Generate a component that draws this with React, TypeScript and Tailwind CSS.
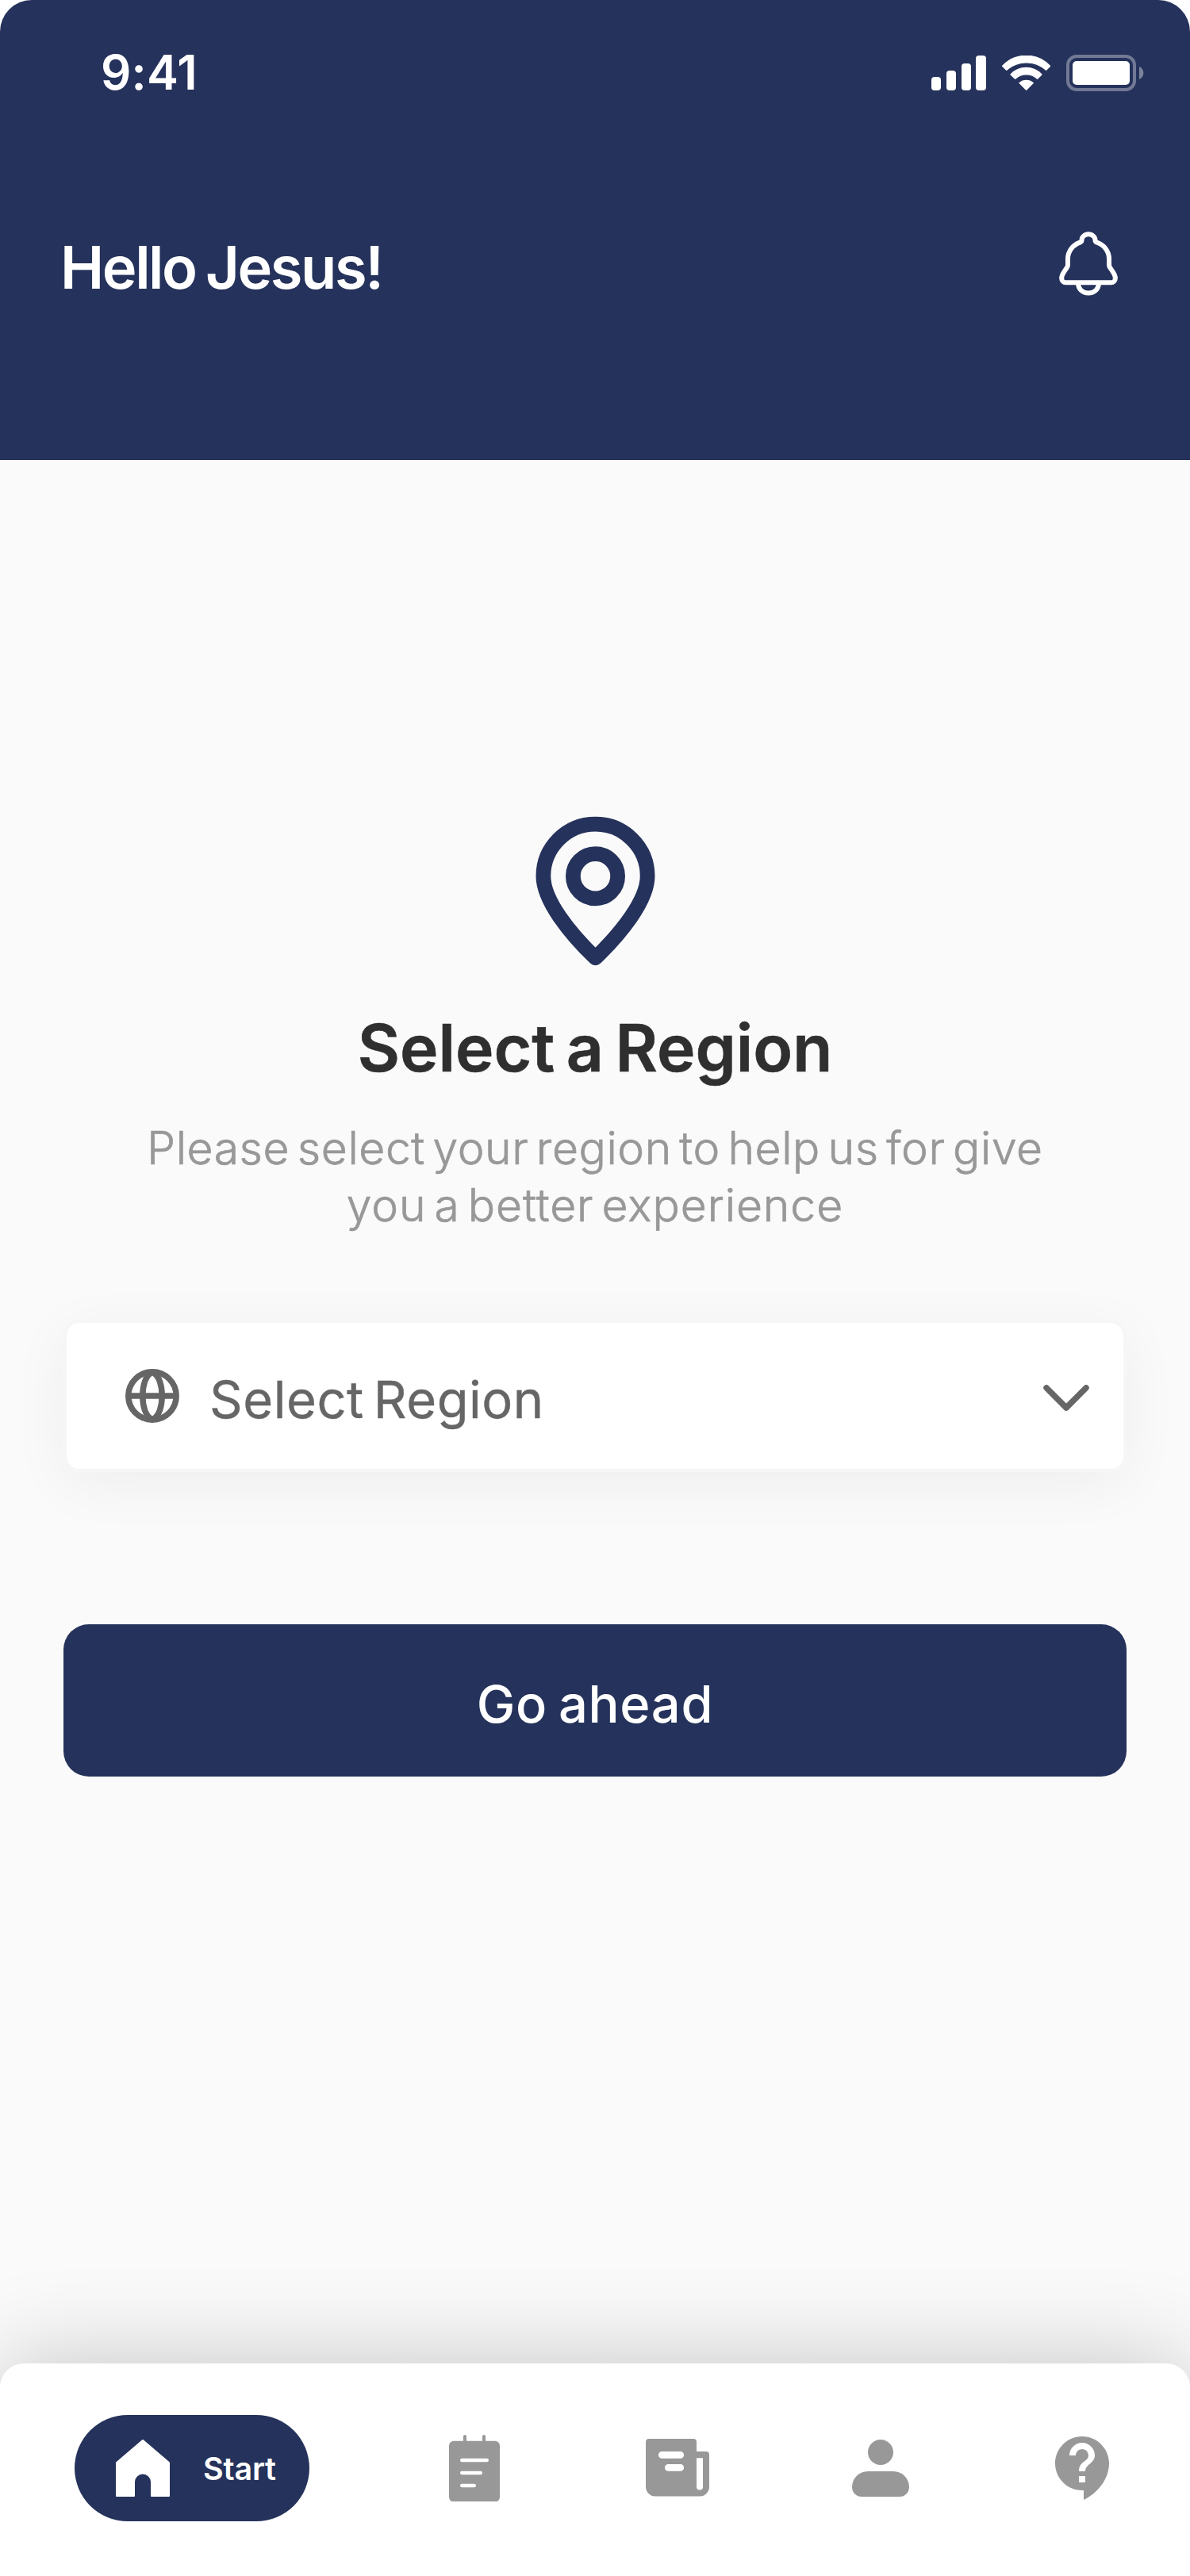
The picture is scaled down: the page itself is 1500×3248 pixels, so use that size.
import type { ReactNode } from "react";

function StatusBar() {
  return (
    <div className="flex h-[181px] items-center justify-between pr-[58px] pl-[127px]">
      <span className="text-[60px] leading-none font-semibold tracking-[0.2px]">9:41</span>
      <div className="flex items-center pt-[3px]">
        <div className="mr-[20px] flex h-[43.3px] items-end gap-[6.5px]">
          <span className="h-[16.5px] w-[12.3px] rounded-[4px] bg-white" />
          <span className="h-[24.5px] w-[12.3px] rounded-[4px] bg-white" />
          <span className="h-[33.5px] w-[12.3px] rounded-[4px] bg-white" />
          <span className="h-[43.3px] w-[12.3px] rounded-[4px] bg-white" />
        </div>
        <svg
          className="mr-[20px] h-[44.3px] w-[61.3px]"
          viewBox="368 87 184 133"
          fill="#fff"
          stroke="#fff"
          strokeWidth="4"
          strokeLinejoin="round"
        >
          <path d="M370 127A123 123 0 0 1 550 127L535 142A113 113 0 0 0 385 142Z" />
          <path d="M401 159A80 80 0 0 1 518 159L502 175A62 62 0 0 0 418 175Z" />
          <path d="M434 191A40 40 0 0 1 486 191L460 217Z" />
        </svg>
        <div className="h-[46px] w-[88px] rounded-[13px] border-4 border-white/35 p-[4px]">
          <div className="h-[30px] w-[72px] rounded-[5px] bg-white" />
        </div>
        <svg className="ml-[4px] h-4 w-[6px]" viewBox="0 0 6 16" fill="#fff" fillOpacity=".4">
          <path d="M0 0C3.3 1.4 5.4 4.5 5.4 8S3.3 14.6 0 16Z" />
        </svg>
      </div>
    </div>
  );
}

function BellIcon() {
  return (
    <svg className="h-[81px] w-[74px]" viewBox="585 755 222 243" fill="none" stroke="#fff" strokeWidth="18" strokeLinejoin="round">
      <path d="M696 765C681 765 670.500 776 670.500 787C670.500 791 668 794.500 664 796C636 806 618 830 618 859V880C618 884 617 888 614 892L604 907C598 916 594.500 922 594.500 931C594.500 941 601 948 611 948H781C791 948 797.500 941 797.500 931C797.500 922 794 916 788 907L778 892C775 888 774 884 774 880V859C774 830 756 806 728 796C724 794.500 721.500 791 721.500 787C721.500 776 711 765 696 765Z" />
      <path d="M657 950C657 973 674 987.500 696 987.500S735 973 735 950" />
    </svg>
  );
}

function PinIcon() {
  return (
    <svg className="size-[225px]" viewBox="0 0 24 24" fill="none" stroke="#25325b" strokeWidth="2" strokeLinejoin="round">
      <path d="M12 21C8.600 17.700 5 13.300 5 10A7 7 0 0 1 19 10C19 13.300 15.400 17.700 12 21Z" />
      <circle cx="12" cy="10" r="3" />
    </svg>
  );
}

function GlobeIcon() {
  return (
    <svg className="size-[68px]" viewBox="0 0 68 68" fill="none" stroke="#666" strokeWidth="7.5">
      <circle cx="34" cy="34" r="30.200" />
      <path d="M4 34H64" />
      <path d="M34 4C25 8 21.800 22 21.800 34S25 60 34 64C43 60 46.200 46 46.200 34S43 8 34 4Z" />
    </svg>
  );
}

function RegionSelect() {
  return (
    <button className="flex h-[192px] w-full items-center rounded-[20px] border-4 border-[#f6f6f6] bg-white pr-[43px] pl-[74px] shadow-[0_16px_72px_rgba(0,0,0,0.05)]">
      <GlobeIcon />
      <span className="mt-[8px] ml-[38px] text-[65px] leading-none font-normal tracking-[0.55px] text-[#666] [-webkit-text-stroke:0.4px_#666] [word-spacing:-7px]">
        Select Region
      </span>
      <svg
        className="mt-[5px] ml-auto h-[33px] w-[58px]"
        viewBox="0 0 58 33"
        fill="none"
        stroke="#666"
        strokeWidth="7.5"
        strokeLinecap="round"
        strokeLinejoin="round"
      >
        <path d="M4 3.800L29 29L54 3.800" />
      </svg>
    </button>
  );
}

function NavItem({ label, className, children }: { label: string; className: string; children: ReactNode }) {
  return (
    <button aria-label={label} className={className}>
      {children}
    </button>
  );
}

function BottomNav() {
  return (
    <nav className="relative flex h-[268px] items-start rounded-t-[30px] bg-white pt-[64.5px] pl-[94px] shadow-[0_0_120px_rgba(0,0,0,0.22)]">
      <button className="flex h-[134px] w-[296px] items-center rounded-full bg-[#25325b] pl-[52px] text-white">
        <svg className="h-[72px] w-[68px]" viewBox="0 0 68 72" fill="#fff">
          <path d="M33.200 .3Q34 -.3 34.800 .3L67.500 28.200Q68 28.700 68 29.400V71Q68 72 67 72H45Q44 72 44 71V53.500A10 10 0 0 0 24 53.500V71Q24 72 23 72H1Q0 72 0 71V29.400Q0 28.700 .5 28.200Z" />
        </svg>
        <span className="mt-[4px] ml-[42px] text-[39.5px] leading-none font-semibold tracking-[-0.2px]">Start</span>
      </button>

      <NavItem label="Notes" className="mt-[25px] ml-[175.700px]">
        <svg className="h-[84.500px] w-[64px]" viewBox="0 0 64 84.500">
          <path d="M20 10V2M44 10V2" stroke="#989898" strokeWidth="4" strokeLinecap="round" />
          <rect y="7.800" width="64" height="76.700" rx="6" fill="#989898" />
          <path d="M16.300 32H47.700M16.300 48H39.700M16.300 64H31.700" stroke="#fff" strokeWidth="4.600" strokeLinecap="round" />
        </svg>
      </NavItem>

      <NavItem label="News" className="mt-[30.700px] ml-[184.300px]">
        <svg className="h-[72.500px] w-[80px]" viewBox="0 0 80 72.500">
          <path d="M4 0H60Q64 0 64 4V16H76Q80 16 80 20V60.500A12 12 0 0 1 68 72.500H12A12 12 0 0 1 0 60.500V4Q0 0 4 0Z" fill="#989898" />
          <path d="M20.300 20.300H43.700M28.300 36.300H43.700" stroke="#fff" strokeWidth="8.800" strokeLinecap="round" />
          <path d="M64 24.300H72V60.500A4 4 0 0 1 64 60.500Z" fill="#fff" />
        </svg>
      </NavItem>

      <NavItem label="Profile" className="mt-[31.500px] ml-[180px]">
        <svg className="size-[72px]" viewBox="0 0 72 72" fill="#989898">
          <circle cx="36" cy="16" r="16" />
          <path d="M20 40H52A20 20 0 0 1 72 60A12 12 0 0 1 60 72H12A12 12 0 0 1 0 60A20 20 0 0 1 20 40Z" />
        </svg>
      </NavItem>

      <NavItem label="Help" className="mt-[19px] ml-[172px]">
        <svg className="size-[96px]" viewBox="0 0 24 24" fill="#989898">
          <path d="M11.5 2C6.810 2 3 5.810 3 10.500S6.810 19 11.500 19h.5v3c4.860-2.340 8-7 8-11.500C20 5.810 16.190 2 11.500 2zm1 14.500h-2v-2h2v2zm0-3.500h-2c0-3.250 3-3 3-5 0-1.100-.9-2-2-2s-2 .9-2 2h-2c0-2.210 1.790-4 4-4s4 1.790 4 4c0 2.500-3 2.750-3 5z" />
        </svg>
      </NavItem>
    </nav>
  );
}

export default function App() {
  return (
    <div className="h-[3248px] w-[1500px] overflow-hidden bg-white font-['Inter',sans-serif]">
      <div className="flex h-full flex-col overflow-hidden rounded-t-[40px] bg-[#fafafa]">
        <header className="h-[580px] shrink-0 bg-[#25325b] text-white">
          <StatusBar />
          <div className="flex items-start justify-between pt-[111px] pr-[91px] pl-[76px]">
            <h1 className="pt-[8px] text-[74px] leading-none font-semibold tracking-[-2.4px] [word-spacing:-4px]">Hello Jesus!</h1>
            <BellIcon />
          </div>
        </header>

        <main className="flex grow flex-col items-center px-[80px] pt-[431px]">
          <PinIcon />
          <h2 className="mt-[36px] text-[82px] leading-[100px] font-semibold [word-spacing:-6px] text-[#2f2f2f] [-webkit-text-stroke:0.6px_#2f2f2f]">
            Select a Region
          </h2>
          <p className="mt-[40px] text-center text-[57px] leading-[72px] font-light whitespace-nowrap text-[#989898] [-webkit-text-stroke:0.7px_#989898] [word-spacing:-7px]">
            <span className="tracking-[0.57px]">Please select your region to help us for give</span>
            <br />
            <span className="tracking-[0.94px]">you a better experience</span>
          </p>
          <div className="mt-[108px] w-full">
            <RegionSelect />
          </div>
          <button className="mt-[192px] h-[192px] w-full rounded-[32px] bg-[#25325b] pt-[8px] text-[65px] leading-none font-medium tracking-[0.7px] text-white [word-spacing:-4px]">
            Go ahead
          </button>
        </main>

        <BottomNav />
      </div>
    </div>
  );
}
